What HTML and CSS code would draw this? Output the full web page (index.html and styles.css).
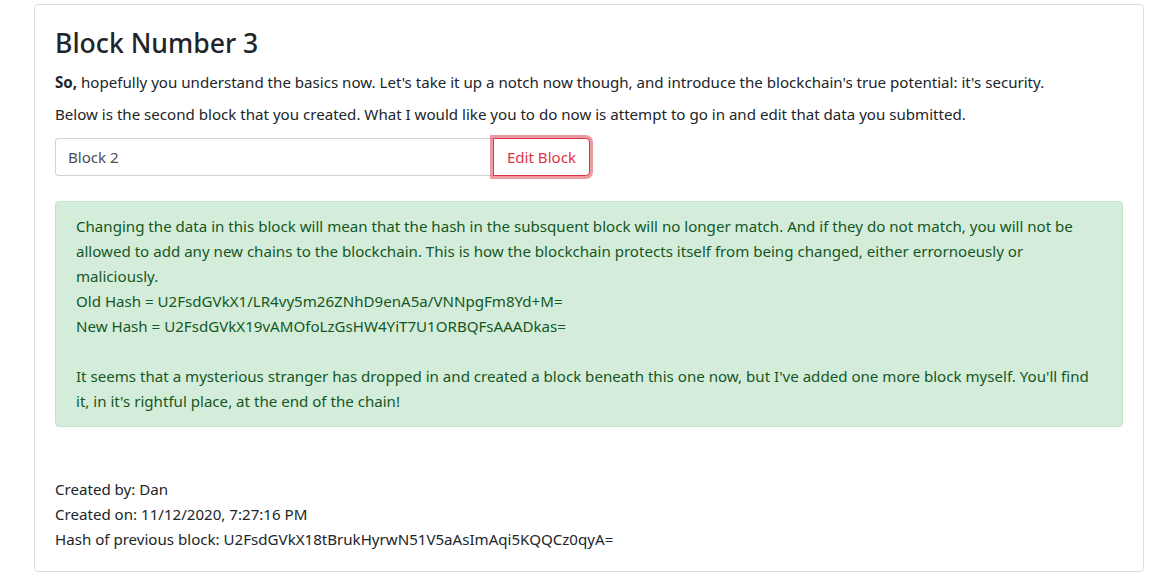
FILE: index.html
```html
<!DOCTYPE html>
<html>
<head>
<meta charset="utf-8">
<link rel="stylesheet" href="styles.css">
</head>
<body>
<div class="card">
  <div class="card-body">
    <h3 class="title">Block Number 3</h3>
    <p class="text"><b>So,</b> hopefully you understand the basics now. Let's take it up a notch now though, and introduce the blockchain's true potential: it's security.</p>
    <p class="text">Below is the second block that you created. What I would like you to do now is attempt to go in and edit that data you submitted.</p>
    <div class="input-group">
      <input class="form-control" type="text" value="Block 2">
      <button class="btn-danger-outline">Edit Block</button>
    </div>
    <div class="alert">
      Changing the data in this block will mean that the hash in the subsquent block will no longer match. And if they do not match, you will not be allowed to add any new chains to the blockchain. This is how the blockchain protects itself from being changed, either errornoeusly or maliciously.<br>
      Old Hash = U2FsdGVkX1/LR4vy5m26ZNhD9enA5a/VNNpgFm8Yd+M=<br>
      New Hash = U2FsdGVkX19vAMOfoLzGsHW4YiT7U1ORBQFsAAADkas=<br>
      <br>
      It seems that a mysterious stranger has dropped in and created a block beneath this one now, but I've added one more block myself. You'll find it, in it's rightful place, at the end of the chain!
    </div>
    <div class="meta">
      <div>Created by: Dan</div>
      <div>Created on: 11/12/2020, 7:27:16 PM</div>
      <div>Hash of previous block: U2FsdGVkX18tBrukHyrwN51V5aAsImAqi5KQQCz0qyA=</div>
    </div>
  </div>
</div>
</body>
</html>
```
FILE: styles.css
```css
* { box-sizing: border-box; }
body {
  margin: 0;
  background: #fff;
  font-family: "Noto Sans", "Open Sans", sans-serif;
  font-size: 15.1px;
  color: #212529;
}
.card {
  margin: 4px 0 0 34px;
  width: 1110px;
  border: 1px solid rgba(0,0,0,.125);
  border-radius: 4px;
}
.card-body {
  padding: 20px 20px 19px;
}
.title {
  margin: 0 0 8.5px;
  font-size: 26.6px;
  font-weight: 500;
  line-height: 36px;
}
.text {
  margin: 0 0 7px;
  line-height: 25px;
}
.input-group {
  display: flex;
  width: 535px;
  margin-top: 11.5px;
}
.form-control {
  flex: 1;
  min-width: 0;
  height: 38px;
  border: 1px solid #ced4da;
  border-right: none;
  border-radius: 4px 0 0 4px;
  padding: 6px 12px;
  font: inherit;
  color: #495057;
  outline: none;
}
.btn-danger-outline {
  height: 38px;
  border: 1px solid #dc3545;
  border-radius: 0 4px 4px 0;
  background: #fff;
  color: #dc3545;
  font: inherit;
  padding: 6px 13px;
  white-space: nowrap;
  box-shadow: 0 0 0 3px rgba(220,53,69,.5);
}
.alert {
  margin-top: 25px;
  padding: 12px 20px;
  background: #d4edda;
  border: 1px solid #c3e6cb;
  border-radius: 4px;
  color: #155724;
  line-height: 25px;
}
.meta {
  margin-top: 50px;
  line-height: 25px;
}
```
